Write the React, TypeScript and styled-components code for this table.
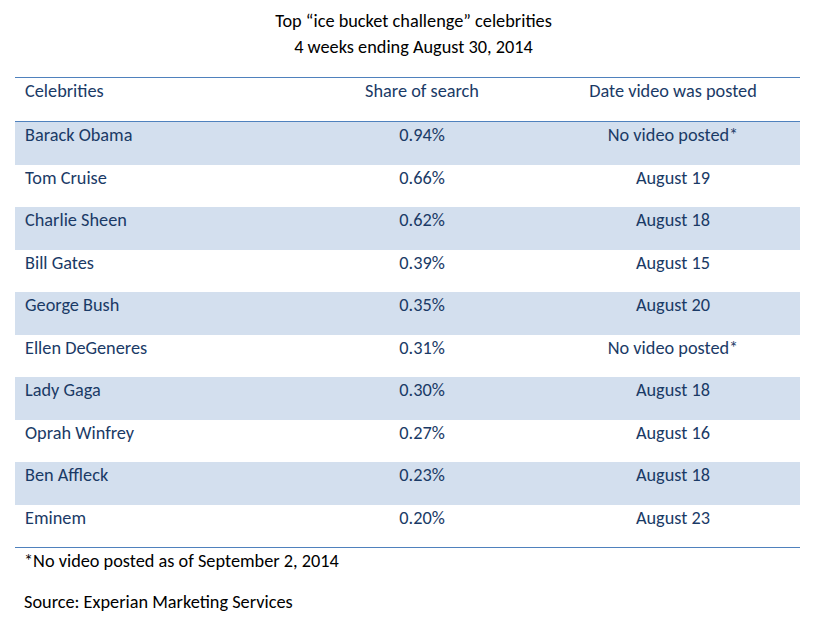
import React from "react";
import styled, { createGlobalStyle } from "styled-components";

const GlobalStyle = createGlobalStyle`
  html, body {
    margin: 0;
    padding: 0;
    background: #ffffff;
  }
  body {
    font-family: "Carlito", "Liberation Sans Narrow", "Liberation Sans", Arial, sans-serif;
  }
`;

type Row = {
  name: string;
  share: string;
  date: string;
};

const rows: Row[] = [
  { name: "Barack Obama", share: "0.94%", date: "No video posted*" },
  { name: "Tom Cruise", share: "0.66%", date: "August 19" },
  { name: "Charlie Sheen", share: "0.62%", date: "August 18" },
  { name: "Bill Gates", share: "0.39%", date: "August 15" },
  { name: "George Bush", share: "0.35%", date: "August 20" },
  { name: "Ellen DeGeneres", share: "0.31%", date: "No video posted*" },
  { name: "Lady Gaga", share: "0.30%", date: "August 18" },
  { name: "Oprah Winfrey", share: "0.27%", date: "August 16" },
  { name: "Ben Affleck", share: "0.23%", date: "August 18" },
  { name: "Eminem", share: "0.20%", date: "August 23" },
];

const App = (): JSX.Element => {
  return (
    <Page>
      <GlobalStyle />
      <Title>
        <div>Top “ice bucket challenge” celebrities</div>
        <div>4 weeks ending August 30, 2014</div>
      </Title>
      <Table>
        <thead>
          <tr>
            <HeadCell>Celebrities</HeadCell>
            <HeadCell align="center">Share of search</HeadCell>
            <HeadCell align="center">Date video was posted</HeadCell>
          </tr>
        </thead>
        <tbody>
          {rows.map((row, i) => (
            <BodyRow key={row.name} shaded={i % 2 === 0}>
              <Cell>{row.name}</Cell>
              <Cell align="center">{row.share}</Cell>
              <Cell align="center">{row.date}</Cell>
            </BodyRow>
          ))}
        </tbody>
      </Table>
      <Note>*No video posted as of September 2, 2014</Note>
      <Note>Source: Experian Marketing Services</Note>
    </Page>
  );
};

const Page = styled.div`
  width: 815px;
  height: 617px;
  padding: 8px 15px 0 15px;
  box-sizing: border-box;
  color: #000000;
  font-size: 18.3px;
`;

const Title = styled.div`
  text-align: center;
  padding-left: 12px;
  line-height: 26px;
  margin-bottom: 17px;
`;

const Table = styled.table`
  width: 785px;
  border-collapse: collapse;
  border-top: 1px solid #4f81bd;
  border-bottom: 1px solid #4f81bd;
  color: #1a3a66;
  table-layout: fixed;
`;

const HeadCell = styled.th<{ align?: string }>`
  font-weight: normal;
  text-align: ${(p) => p.align ?? "left"};
  padding: 3px 10px 0 10px;
  height: 40px;
  vertical-align: top;
  line-height: 20px;
  border-bottom: 1px solid #4f81bd;

  &:nth-child(1) {
    width: 263px;
  }
  &:nth-child(2) {
    width: 228px;
  }
`;

const BodyRow = styled.tr<{ shaded: boolean }>`
  background: ${(p) => (p.shaded ? "#d3dfee" : "#ffffff")};
`;

const Cell = styled.td<{ align?: string }>`
  text-align: ${(p) => p.align ?? "left"};
  padding: 3px 10px 0 10px;
  height: 39.5px;
  vertical-align: top;
  line-height: 20px;
`;

const Note = styled.div`
  padding-left: 9px;
  line-height: 20px;
  margin-top: 3px;
  margin-bottom: 21px;
`;

export default App;
